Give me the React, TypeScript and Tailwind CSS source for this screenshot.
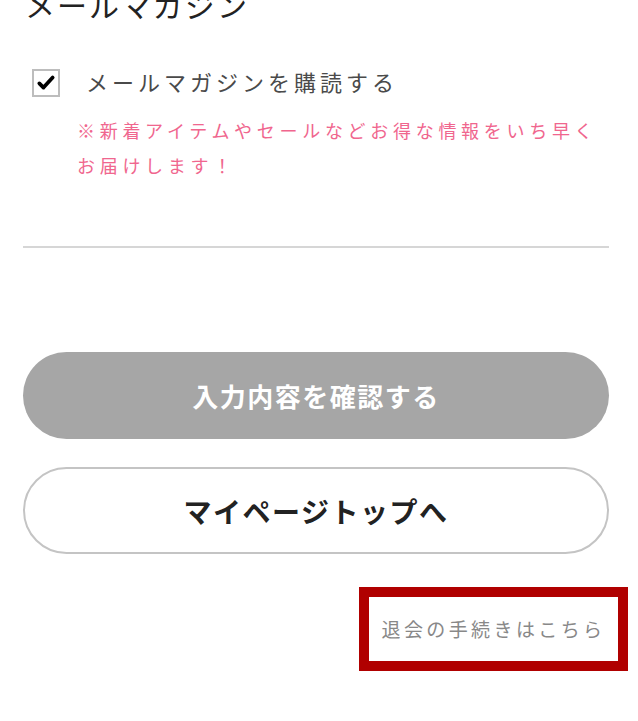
export default function App() {
  return (
    <div className="min-h-screen bg-white font-['Noto_Sans_CJK_JP','Noto_Sans',sans-serif]">
      <div className="pl-[23px] pr-[29px]">
        <h2 className="-mt-[11px] ml-[2px] text-[30px] leading-[30px] tracking-[2px] text-[#222]">
          メールマガジン
        </h2>

        <label className="mt-[50px] ml-[9px] flex items-center gap-[26px]">
          <span className="flex size-[28px] shrink-0 items-center justify-center border-2 border-[#bdbdbd] bg-white">
            <svg viewBox="0 0 24 24" className="size-[20px]" fill="none" stroke="#000" strokeWidth="4.5" strokeLinecap="round" strokeLinejoin="round">
              <path d="M4 12.5l5 5L20 5.5" />
            </svg>
          </span>
          <span className="-mt-[4px] text-[22px] leading-[28px] tracking-[4px] text-[#4a4a4a]">
            メールマガジンを購読する
          </span>
        </label>

        <p className="mt-[16px] ml-[54px] whitespace-nowrap text-[18px] leading-[35px] tracking-[4.7px] text-[#f0668e]">
          ※新着アイテムやセールなどお得な情報をいち早く
          <br />
          お届けします！
        </p>

        <hr className="mt-[63px] border-t-2 border-[#d6d6d6]" />

        <div className="mt-[104px] flex flex-col gap-[28px]">
          <button className="flex h-[87px] w-full items-center justify-center rounded-full bg-[#a6a6a6] text-[26px] font-bold tracking-[1.5px] text-white">
            入力内容を確認する
          </button>
          <button className="flex h-[87px] w-full items-center justify-center rounded-full border-2 border-[#c4c4c4] bg-white text-[28px] font-bold tracking-[1.5px] text-[#222]">
            マイページトップへ
          </button>
        </div>

        <div className="mt-[33px] flex justify-end">
          <a className="-mr-[19px] flex h-[84px] w-[269px] items-center justify-center border-[10px] border-[#b00000] text-[19px] tracking-[3.4px] text-[#888]">
            退会の手続きはこちら
          </a>
        </div>
      </div>
    </div>
  );
}
